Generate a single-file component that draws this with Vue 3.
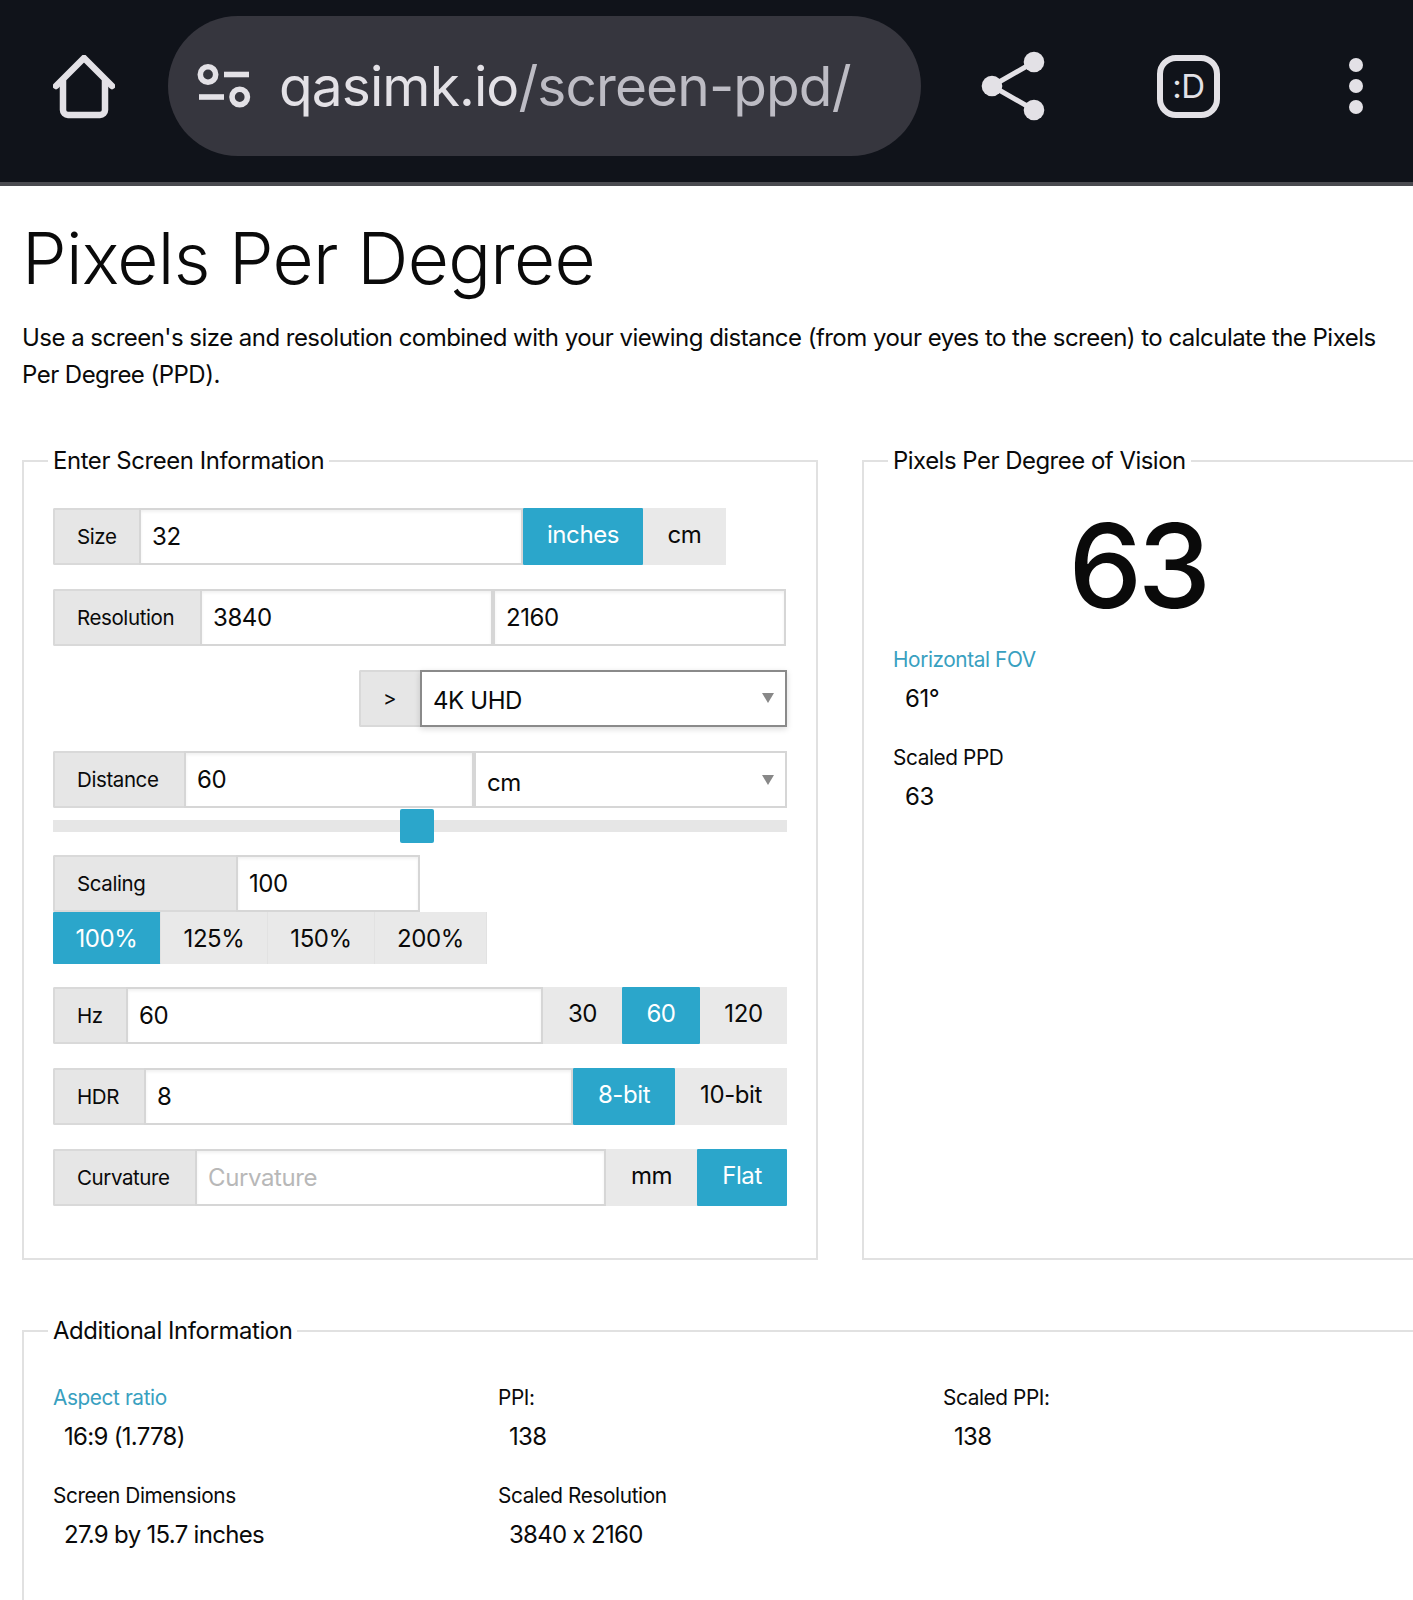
<script setup>
const info = [
  { label: 'Aspect ratio', value: '16:9 (1.778)', link: true },
  { label: 'PPI:', value: '138' },
  { label: 'Scaled PPI:', value: '138' },
  { label: 'Screen Dimensions', value: '27.9 by 15.7 inches' },
  { label: 'Scaled Resolution', value: '3840 x 2160' },
]
</script>

<template>
  <div class="page">
    <header class="bar">
      <svg class="home" width="62" height="64" viewBox="0 0 62 64" fill="none" stroke="#e3e1e6" stroke-width="6.5" stroke-linecap="round" stroke-linejoin="round">
        <path d="M3 31 31 3 59 31" />
        <path d="M10 26V55a5 5 0 0 0 5 5H47a5 5 0 0 0 5-5V26" />
      </svg>
      <div class="pill">
        <svg class="tune" width="54" height="46" viewBox="0 0 54 46" fill="none" stroke="#e3e1e6" stroke-width="5.6">
          <circle cx="11" cy="11.5" r="7.7" />
          <path d="M27 11.5H52" />
          <path d="M2 34H27" />
          <circle cx="42.7" cy="34" r="7.7" />
        </svg>
        <span class="url"><b>qasimk.io</b>/screen-ppd/</span>
      </div>
      <svg class="share" width="64" height="70" viewBox="0 0 64 70" fill="#e3e1e6" stroke="#e3e1e6">
        <path d="M53 11 11 35 53 59" fill="none" stroke-width="5" />
        <circle cx="53" cy="11" r="10.3" stroke="none" />
        <circle cx="11" cy="35" r="10.3" stroke="none" />
        <circle cx="53" cy="59" r="10.3" stroke="none" />
      </svg>
      <div class="ddg">:D</div>
      <svg class="dots" width="16" height="58" viewBox="0 0 16 58" fill="#e3e1e6">
        <circle cx="8" cy="8" r="7" />
        <circle cx="8" cy="29" r="7" />
        <circle cx="8" cy="50" r="7" />
      </svg>
    </header>

    <main class="content">
      <h1>Pixels Per Degree</h1>
      <p class="intro">Use a screen's size and resolution combined with your viewing distance (from your eyes to the screen) to calculate the Pixels Per Degree (PPD).</p>

      <div class="cols">
        <fieldset class="box enter">
          <legend>Enter Screen Information</legend>

          <div class="row w-size">
            <span class="addon l-size">Size</span>
            <span class="field grow">32</span>
            <span class="btn active b-inches">inches</span>
            <span class="btn b-cm">cm</span>
          </div>

          <div class="row">
            <span class="addon l-res">Resolution</span>
            <span class="field half">3840</span>
            <span class="field half">2160</span>
          </div>

          <div class="row preset">
            <span class="addon l-gt">&gt;</span>
            <span class="field grow select dark">4K UHD<i class="caret"></i></span>
          </div>

          <div class="row tight">
            <span class="addon l-dist">Distance</span>
            <span class="field f-dist">60</span>
            <span class="field grow select low">cm<i class="caret up"></i></span>
          </div>
          <div class="slider"><i class="thumb"></i></div>

          <div class="row w-scale flush">
            <span class="addon l-scale">Scaling</span>
            <span class="field grow">100</span>
          </div>
          <div class="scales">
            <span class="btn active first">100%</span>
            <span class="btn">125%</span>
            <span class="btn">150%</span>
            <span class="btn wide">200%</span>
          </div>

          <div class="row">
            <span class="addon l-hz">Hz</span>
            <span class="field grow">60</span>
            <span class="btn b-30">30</span>
            <span class="btn active b-60">60</span>
            <span class="btn b-120">120</span>
          </div>

          <div class="row">
            <span class="addon l-hdr">HDR</span>
            <span class="field grow">8</span>
            <span class="btn active b-8">8-bit</span>
            <span class="btn b-10">10-bit</span>
          </div>

          <div class="row last">
            <span class="addon l-curve">Curvature</span>
            <span class="field grow ph">Curvature</span>
            <span class="btn b-mm">mm</span>
            <span class="btn active b-flat">Flat</span>
          </div>
        </fieldset>

        <fieldset class="box result">
          <legend>Pixels Per Degree of Vision</legend>
          <div class="big">63</div>
          <dl class="stat">
            <dt class="link">Horizontal FOV</dt>
            <dd>61°</dd>
            <dt>Scaled PPD</dt>
            <dd>63</dd>
          </dl>
        </fieldset>
      </div>

      <fieldset class="box extra">
        <legend>Additional Information</legend>
        <div class="grid">
          <div v-for="item in info" :key="item.label" class="cell">
            <div class="cell-label" :class="{ link: item.link }">{{ item.label }}</div>
            <div class="cell-value">{{ item.value }}</div>
          </div>
        </div>
      </fieldset>
    </main>
  </div>
</template>

<style>
html, body { margin: 0; background: #fff; overflow: hidden; }
</style>

<style scoped>
.page {
  width: 1413px;
  height: 1600px;
  overflow: hidden;
  position: relative;
  background: #fff;
  color: #0a0a0a;
  font-family: Inter, Roboto, sans-serif;
  letter-spacing: -0.4px;
}
.bar {
  height: 172px;
  padding-bottom: 10px;
  border-bottom: 4px solid #4a4b50;
  background: #10131a;
  display: flex;
  align-items: center;
  box-sizing: content-box;
}
.home { margin: 2px 0 0 53px; flex: none; }
.pill {
  margin-left: 53px;
  width: 753px;
  height: 140px;
  border-radius: 70px;
  background: #36363e;
  display: flex;
  align-items: center;
  flex: none;
}
.tune { margin-left: 29px; flex: none; }
.url {
  margin-left: 28px;
  font-size: 55px;
  letter-spacing: -0.89px;
  color: #bdbcc4;
  white-space: nowrap;
}
.url b { font-weight: 400; color: #e3e1e6; }
.share { margin-left: 60px; flex: none; }
.ddg {
  margin-left: 112px;
  width: 63px;
  height: 63px;
  box-sizing: border-box;
  border: 6px solid #e3e1e6;
  border-radius: 19px;
  color: #e3e1e6;
  font-size: 33px;
  display: flex;
  align-items: center;
  justify-content: center;
  flex: none;
}
.dots { margin-left: 128px; flex: none; }

.content { padding: 0 0 0 22px; }
h1 {
  margin: 0;
  padding-top: 29px;
  font-size: 71px;
  line-height: 86px;
  font-weight: 300;
  letter-spacing: -0.65px;
}
.intro {
  margin: 18px 0 0;
  width: 1375px;
  font-size: 24px;
  letter-spacing: -0.53px;
  line-height: 37.2px;
}
.cols {
  display: flex;
  gap: 44px;
  margin-top: 53px;
}
.box {
  margin: 0;
  padding: 0 29px;
  border: 2px solid #e1e1e1;
  box-sizing: border-box;
  min-width: 0;
}
legend {
  padding: 0 5px;
  margin-left: -5px;
  font-size: 23.9px;
  line-height: 30px;
}
.enter { width: 796px; height: 814px; flex: none; padding-top: 32px; }
.result { width: 556px; height: 814px; flex: none; }
.result legend { letter-spacing: -0.47px; }
.extra { width: 1420px; height: 320px; margin-top: 56px; }

.row {
  display: flex;
  height: 57px;
  margin-bottom: 24px;
  font-size: 24px;
}
.row.tight { margin-bottom: 12px; }
.row.flush { margin-bottom: 0; }
.row.last { margin-bottom: 0; }
.w-size { width: 673px; }
.w-scale { width: 367px; }
.preset { padding-left: 306px; }
.addon {
  box-sizing: border-box;
  flex: none;
  background: #e6e6e6;
  border: 2px solid #d9d9d9;
  border-right: 0;
  border-radius: 2px 0 0 2px;
  font-size: 20.5px;
  display: flex;
  align-items: center;
  padding-left: 22px;
}
.field {
  box-sizing: border-box;
  background: #fff;
  border: 2px solid #d6d6d6;
  padding-left: 11px;
  display: flex;
  align-items: center;
  position: relative;
  box-shadow: inset 0 2px 3px rgba(0, 0, 0, 0.06);
}
.grow { flex: 1 1 0; min-width: 0; }
.half { flex: 0 0 293px; }
.select { box-shadow: none; }
.dark { border-color: #8a8a8a; box-shadow: 0 2px 6px rgba(0, 0, 0, 0.15); padding-top: 4px; }
.low { padding-top: 5px; }
.caret {
  position: absolute;
  right: 11px;
  top: 21px;
  border-left: 6px solid transparent;
  border-right: 6px solid transparent;
  border-top: 10px solid #888;
}
.caret.up { top: 22px; }
.ph { color: #b8b8b8; }
.btn {
  box-sizing: border-box;
  flex: none;
  background: #e9e9e9;
  display: flex;
  align-items: center;
  justify-content: center;
  padding-bottom: 4px;
  font-size: 24px;
}
.btn.active { background: #2ba6cb; color: #fff; border-radius: 1px; }

.l-size { width: 86px; }
.b-inches { width: 120px; }
.b-cm { width: 83px; }
.l-res { width: 147px; }
.l-gt { width: 61px; }
.l-dist { width: 131px; }
.f-dist { flex: 0 0 290px; }
.l-scale { width: 183px; }
.l-hz { width: 73px; }
.b-30 { width: 79px; }
.b-60 { width: 78px; }
.b-120 { width: 87px; }
.l-hdr { width: 91px; }
.b-8 { width: 102px; }
.b-10 { width: 112px; }
.l-curve { width: 142px; }
.b-mm { width: 91px; }
.b-flat { width: 90px; }

.slider {
  position: relative;
  height: 12px;
  background: #e6e6e6;
  margin-bottom: 23px;
}
.thumb {
  position: absolute;
  left: 347px;
  top: -11px;
  width: 34px;
  height: 34px;
  border-radius: 2px;
  background: #2ba6cb;
}
.scales {
  display: flex;
  height: 52px;
  margin-bottom: 23px;
}
.scales .btn { width: 107px; padding: 0; border-right: 1px solid #e2e2e2; }
.scales .first { width: 108px; }
.scales .wide { width: 112px; }

.big {
  text-align: center;
  font-size: 117px;
  font-weight: 500;
  letter-spacing: -4.6px;
  line-height: 150px;
  margin-top: 15px;
  padding-right: 5px;
}
.stat { margin: 4px 0 0; font-size: 20.8px; }
.stat dt { line-height: 30px; }
.stat dd {
  margin: 0 0 21px 12px;
  font-size: 24px;
  line-height: 47px;
}
.link { color: #38a0c0; }

.grid {
  display: grid;
  grid-template-columns: repeat(3, 445px);
  row-gap: 20px;
  padding-top: 37px;
}
.cell-label { font-size: 20.8px; line-height: 30px; }
.cell-value { font-size: 24px; letter-spacing: -0.7px; line-height: 48px; padding-left: 11px; }
</style>
